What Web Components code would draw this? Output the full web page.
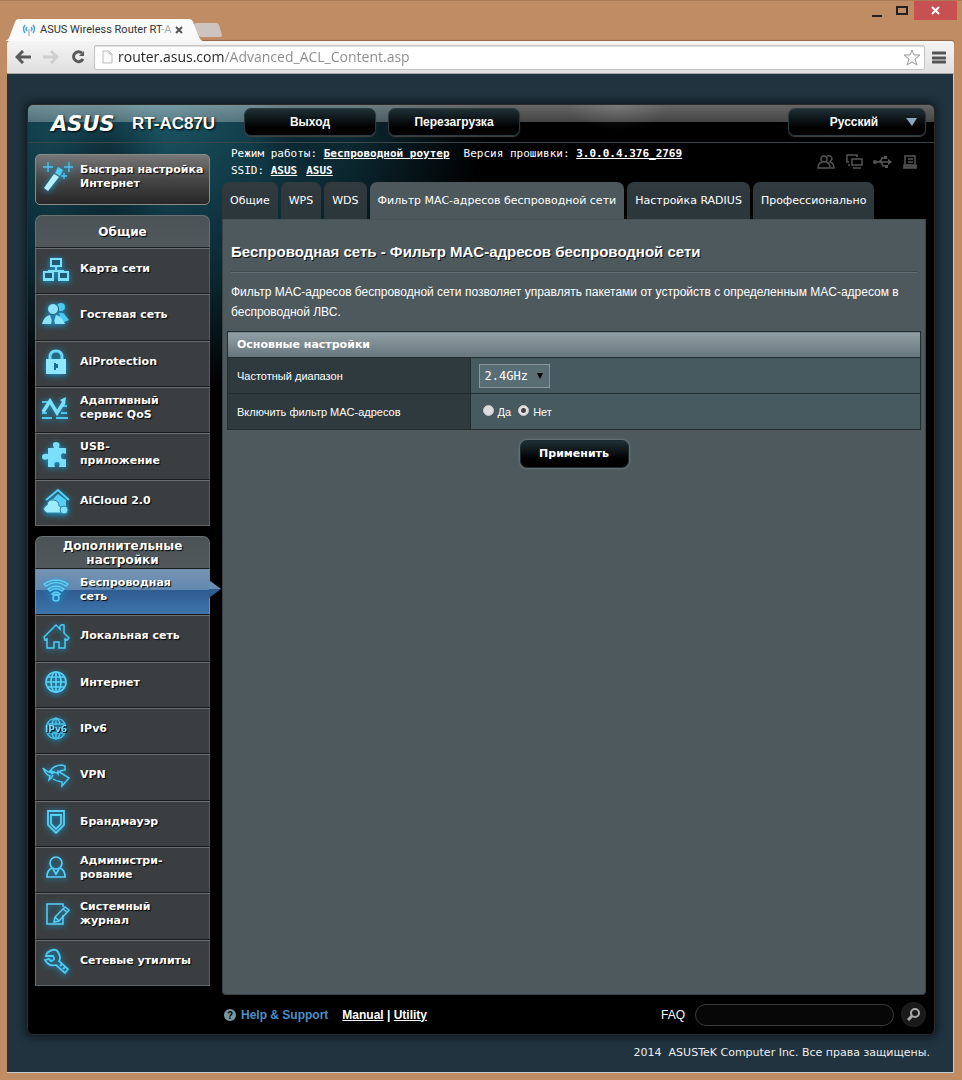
<!DOCTYPE html>
<html lang="ru">
<head>
<meta charset="utf-8">
<title>ASUS Wireless Router RT-AC87U</title>
<style>
html { height: 100%; }
body { margin: 0; min-height: 100%; display: flex; flex-direction: column; background: #c08c64; font-family: "Liberation Sans", Arial, sans-serif; }
</style>
</head>
<body>
<browser-window>
  <router-shell>
    <router-banner slot="banner"></router-banner>
    <side-nav slot="nav"></side-nav>
    <status-bar slot="main"></status-bar>
    <page-tabs slot="main"></page-tabs>
    <filter-panel slot="main"></filter-panel>
    <help-bar slot="main"></help-bar>
  </router-shell>
</browser-window>
<script>
function define(name, html) {
  const template = document.createElement('template');
  template.innerHTML = html;
  customElements.define(name, class extends HTMLElement {
    constructor() {
      super();
      this.attachShadow({ mode: 'open' }).append(template.content.cloneNode(true));
    }
  });
}

const ICONS = {
  wand: '<g stroke="#4cc4f0" stroke-width="1.3"><path d="M5 0v10M0 5h10M26 0v10M21 5h9M21 11v6M18 14h6" /></g><path d="M1 26 11 12l5 3L5 29z" fill="#b8f0ff"/><path d="M12 11 15 5l5 3-3 6z" fill="#4fcdf5"/>',
  map: '<g fill="#1f5a76" stroke="#7de0fb" stroke-width="2"><path d="M9 4h10v7H9zM2 17h9v7H2zM17 17h9v7h-9z"/></g><path d="M14 12v4M6 16h16M1 25h11M16 25h11" stroke="#7de0fb" stroke-width="2"/>',
  guest: '<circle cx="19" cy="6" r="4" fill="#49c8f2"/><path d="M17 12q5-1 6 2l4 5-7 3z" fill="#49c8f2"/><circle cx="11" cy="8" r="5.500" fill="#8ce4fc" stroke="#2a5a70"/><path d="M0 23q2-8 8-9l3 9zM23 23q-3-8-9-9l-3 9z" fill="#8ce4fc"/><path d="M11 14l-2 9h4z" fill="#2b7b9a"/>',
  lock: '<path d="M8 12V9q0-6 6-6t6 6v3" fill="none" stroke="#6ad8fa" stroke-width="3"/><path d="M4 11h20v15H4z" fill="#90e6fd"/><path d="M13 15v7M15 16v4" stroke="#1c6c8e" stroke-width="2"/>',
  qos: '<path d="M0 8h6M19 12h6M0 19h5M19 19h6M0 24h10M14 24h12" stroke="#4fc4ec" stroke-width="2"/><path d="M1 18 8 7l7 12 7-11" fill="none" stroke="#7de0fb" stroke-width="3.500"/><path d="M18 6l6-3-1 8z" fill="#7de0fb"/>',
  puzzle: '<path d="M6 8h6q-3-6 2-6t3 6h7v6q-5-2-5 2t5 3v8h-7q2-5-2-5t-2 5H6v-8q-6 2-6-2t6-3z" fill="#7adffb"/>',
  cloud: '<path d="M4 13 16 3l11 10" fill="none" stroke="#58d0f6" stroke-width="2"/><path d="M16 7l8 6v10H8v-8z" fill="#56cdf3"/><path d="M5 26q-7-4 0-8 1-6 7-5 5 1 5 6 5 2 3 7z" fill="#9cebff" stroke="#2b86a9"/><circle cx="22" cy="23" r="4" fill="#82e2fc" stroke="#2b86a9"/>',
  wifi: '<g fill="none" stroke="#5bcff3" stroke-width="1.500"><path d="M2 8q12-8 24 0l-2 2q-10-7-20 0zM6 13q8-6 16 0l-2 2q-6-5-12 0zM10 18q4-4 8 0l-2 1q-2-2-4 0z"/><circle cx="14" cy="22" r="3"/></g>',
  house: '<path d="M2 15 14 3l4 4q-1-5 4-4v8l5 5-2 2-2-1v9h-6v-6h-5v6H5v-9l-2 1z" fill="none" stroke="#4fcbf2" stroke-width="1.500"/>',
  globe: '<g fill="none" stroke="#5bd0f5" stroke-width="1.600"><circle cx="14" cy="13" r="10"/><ellipse cx="14" cy="13" rx="5" ry="10"/><path d="M4 13h20M14 3v20M6 8h16M6 18h16"/></g>',
  ipv6: '<g fill="none" stroke="#4cc4ea" stroke-width="1.400"><path d="M5 9a10 10 0 0 1 18 0zM5 18a10 10 0 0 0 18 0zM10 9q1-5 4-6 3 1 4 6M10 18q1 5 4 6 3-1 4-6M14 3v6M14 18v6"/></g><text x="14" y="17" text-anchor="middle" font-family="DejaVu Sans" font-size="9" fill="#7bdcf8">IPv6</text>',
  vpn: '<path d="M1 7q6 6 11 4-2-1-4-1 4-6 12-6l3 1v4q-5 0-8 4M9 13q5-3 7 0v-3l11 7-7 8v-4q-6-1-9-3M1 7q3 7 7 8l-1 4q3-2 4-5" fill="none" stroke="#4fcbf2" stroke-width="1.500"/>',
  shield: '<g fill="none" stroke="#5bd0f5" stroke-width="1.800"><path d="M6 3h16v14l-8 8-8-8z"/><path d="M9 7h10v9l-5 5-5-5z"/></g>',
  admin: '<g fill="none" stroke="#5bd0f5" stroke-width="1.700"><circle cx="14" cy="9" r="6"/><path d="M10 14q-5 2-5 9h18q0-7-5-9M11 15l3 5 3-5"/></g>',
  log: '<g fill="none" stroke="#5bd0f5" stroke-width="1.500"><path d="M21 15v9H5V4h16v3"/><path d="M12 22l1-5L23 7l4 3-10 11zM13 17l4 4M21 9l4 3"/></g>',
  tools: '<g fill="none" stroke="#4fcbf2" stroke-width="1.800"><path d="M5 6q9-7 12 1 2 4 0 7l9 8-3 4-9-8q-7 2-11-5l4-1 2 2q5-1 2-5H4z"/><path d="M18 19l2-2M21 22l2-2"/></g>',
  clients: '<g fill="none" stroke="#555" stroke-width="1.400"><circle cx="6" cy="5" r="3"/><path d="M4 8q-4 1-4 6h12q0-5-4-6M9 2q5-1 5 3l-2 3q4 1 4 6h-3"/></g>',
  lan: '<g fill="none" stroke="#555" stroke-width="1.500"><rect x="6" y="5" width="10" height="6"/><path d="M11 3V1H1v7h2M7 14h8M2 11h2"/></g>',
  usb: '<g fill="none" stroke="#555" stroke-width="1.500"><path d="M1 8h14M3 8q4 0 5-4h3M5 8q3 0 4 4h3"/></g><circle cx="1" cy="8" r="2" fill="#555"/><path d="M14 5l4 3-4 3zM10 2h3v3h-3zM11 11h3v3h-3z" fill="#555"/>',
  printer: '<g fill="none" stroke="#555" stroke-width="1.500"><path d="M3 10V2h10v8M6 5h5M6 8h5"/><path d="M2 11h12v3H2z" fill="#444"/></g>'
};
customElements.define('line-icon', class extends HTMLElement {
  connectedCallback() {
    if (this.shadowRoot) return;
    const box = this.getAttribute('box') || 28;
    this.attachShadow({ mode: 'open' }).innerHTML = `
      <style>:host{display:block;flex:none} svg{display:block;overflow:visible}</style>
      <svg width="${box}" height="${box}" viewBox="0 0 ${box} ${box}" fill="none" aria-hidden="true">${ICONS[this.getAttribute('name')]}</svg>`;
  }
});

define('browser-window', `
<style>
:host { flex: 1; display: flex; flex-direction: column; padding: 0 8px 7px 7px; border-top: 1px solid #a87a56; }
svg { display: block; }
.strip { display: flex; align-items: flex-end; height: 40px; position: relative; }
.tab { position: relative; display: flex; align-items: center; width: 190px; height: 22px; color: #333; font: 11px/18px Roboto, sans-serif; box-sizing: border-box; padding: 0 14px 0 15px; }
.shape { position: absolute; left: -2px; bottom: 0; }
.tab > :not(.shape) { position: relative; }
.title { flex: 1; margin-left: 4px; white-space: nowrap; }
.fade { color: #aaa; }
button { border: 0; padding: 0; background: none; display: block; color: inherit; }
.new { margin: 0 0 4px -3px; }
.controls { position: absolute; right: -3px; top: 0; display: flex; align-items: flex-start; }
.controls button { height: 19px; }
.close { width: 43px; background: #c75050; }
.min, .max { width: 25px; }
.controls svg { margin: auto; }
.bar { display: flex; align-items: center; height: 32px; background: linear-gradient(#f5f5f5,#dfdfdf); border-bottom: 1px solid #aaa; border-radius: 3px 3px 0 0; padding: 0 8px; box-shadow: 0 -1px 1px #8d6547; }
.bar > button { margin-right: 12px; }
.bar > .reload { margin-right: 9px; }
.address { flex: 1; display: flex; align-items: center; height: 25px; box-sizing: border-box; background: #fff; border: 1px solid #c4c4c4; border-radius: 2px; padding: 0 3px 0 7px; box-shadow: inset 0 1px 1px #ddd; }
input { flex: 1; min-width: 0; border: 0; outline: 0; padding: 0; margin-left: 5px; height: 20px; font: 14px/20px "Open Sans", sans-serif; background: linear-gradient(90deg,#222 106px,#8a8a8a 106px); background-clip: text; -webkit-text-fill-color: transparent; }
.bar > .menu { margin: 0 0 0 7px; }
.view { flex: 1; display: flex; flex-direction: column; background: #21333e; border: solid #c7ccd0; border-width: 0 1px 1px 0; }
</style>
<div class="strip">
  <div class="tab">
    <svg class="shape" width="198" height="22"><path d="M0 22Q3 21 4 19L10 3Q11 0 14 0H184Q187 0 188 3L194 18Q195 21 198 22z" fill="#fafafa"/></svg>
    <svg width="14" height="14" fill="none" stroke="#47a9d4" stroke-width="1.500"><path d="M3 2Q0 6 3 10M5 4Q3 6 5 8M11 2q3 4 0 8M9 4q2 2 0 4"/><path d="M7 6v7" stroke="#b9b9b9"/></svg>
    <span class="title">ASUS Wireless Router RT<span class="fade">-A</span></span>
    <button aria-label="Закрыть вкладку"><svg width="8" height="8" stroke="#555" stroke-width="2"><path d="M1 1l6 6M7 1L1 7"/></svg></button>
  </div>
  <button class="new" aria-label="Новая вкладка"><svg width="28" height="14"><path d="M0 2Q0 0 3 0H22Q24 0 25 2L28 12Q28 14 26 14H7Q5 14 4 12z" fill="#cdc4bf"/></svg></button>
  <div class="controls">
    <button class="min" aria-label="Свернуть"><svg width="10" height="16"><path d="M0 12h10v2H0z" fill="#222"/></svg></button>
    <button class="max" aria-label="Развернуть"><svg width="12" height="17"><path d="M1 5h10v7H1z" fill="none" stroke="#222" stroke-width="2"/></svg></button>
    <button class="close" aria-label="Закрыть"><svg width="9" height="9" stroke="#fff" stroke-width="2"><path d="M1 1l7 7M8 1L1 8"/></svg></button>
  </div>
</div>
<div class="bar">
  <button aria-label="Назад"><svg width="16" height="14" fill="none" stroke="#5a5a5a" stroke-width="3"><path d="M8 1L2 7l6 6M2 7h14"/></svg></button>
  <button aria-label="Вперёд"><svg width="16" height="14" fill="none" stroke="#cfcfcf" stroke-width="3"><path d="M8 1l6 6-6 6M14 7H0"/></svg></button>
  <button class="reload" aria-label="Обновить"><svg width="14" height="14" fill="none" stroke="#5a5a5a" stroke-width="3"><path d="M11 3A5 5 0 1 0 12 9"/><path d="M13 1v5H8z" fill="#5a5a5a" stroke="none"/></svg></button>
  <div class="address">
    <svg width="11" height="14" fill="#fafafa" stroke="#bbb"><path d="M1 1h6l3 3v9H1zM7 1v3h3"/></svg>
    <input aria-label="Адрес" value="router.asus.com/Advanced_ACL_Content.asp">
    <button aria-label="Добавить в закладки"><svg width="18" height="17" fill="#fff" stroke="#999"><path d="M9 1l2 5h6l-5 4 2 6-5-3-5 3 2-6-5-4h6z"/></svg></button>
  </div>
  <button class="menu" aria-label="Меню"><svg width="14" height="13"><path d="M1 2h12M1 7h12M1 11h12" stroke="#555" stroke-width="3" stroke-linecap="round"/></svg></button>
</div>
<div class="view"><slot></slot></div>`);

define('router-shell', `
<style>
:host { flex: 1; display: flex; flex-direction: column; padding: 30px 18px 0 20px; }
.case { flex: 1; display: flex; flex-direction: column; color: #fff; background:
   radial-gradient(ellipse 60px 100px at 80px 70px,#04141caa,transparent),
   radial-gradient(ellipse 50px 60px at 270px 20px,#04141c88,transparent),
   radial-gradient(ellipse 350px 290px at 110px 0,#1d5a6a 0,#103844 40%,#0b252e 65%,transparent),
   #000;
   border: 1px solid #2c2a2b; border-radius: 6px; box-shadow: 0 0 9px 2px #0c1820; box-sizing: border-box; }
.columns { flex: 1; display: grid; grid-template-columns: 175px minmax(0,1fr); column-gap: 12px; padding: 0 8px 0 7px; }
.main { display: flex; flex-direction: column; min-width: 0; }
footer { height: 37px; box-sizing: border-box; padding: 10px 5px 0 0; text-align: right; color: #eee; font: 11px/16px "DejaVu Sans", sans-serif; white-space: pre; }
</style>
<div class="case">
  <slot name="banner"></slot>
  <div class="columns">
    <slot name="nav"></slot>
    <div class="main"><slot name="main"></slot></div>
  </div>
</div>
<footer>2014  ASUSTeK Computer Inc. Все права защищены.</footer>`);

define('router-banner', `
<style>
:host { display: flex; align-items: flex-start; gap: 12px; height: 34px; padding: 3px 8px 0 23px; border-bottom: 1px solid #3b4548; border-radius: 5px 5px 0 0; background:
  radial-gradient(ellipse 50px 25px at 590px 0,#fff2,transparent),
  linear-gradient(#fff6 0,#fff4 17px,transparent 17px); }
.brand { display: flex; align-items: center; width: 181px; height: 31px; white-space: nowrap; text-shadow: 1px 1px 2px #000; }
.logo { font: italic bold 21px/24px "DejaVu Sans", sans-serif; width: 81px; }
.model { font: bold 17px/24px "Liberation Sans", sans-serif; }
button, select { height: 28px; border: 1px solid #2c3b40; border-radius: 7px; background: linear-gradient(#1f3036,#000 70%); color: #fff; font: bold 12px/16px "Liberation Sans", sans-serif; box-shadow: 0 1px 1px #444; padding: 0; text-shadow: 1px 1px #000; box-sizing: border-box; }
button { width: 132px; }
.lang { margin-left: auto; position: relative; }
select { appearance: none; width: 138px; padding: 0 6px 0 0; text-align: center; text-align-last: center; }
.lang svg { position: absolute; right: 8px; top: 10px; pointer-events: none; }
</style>
<div class="brand"><span class="logo">ASUS</span><span class="model">RT-AC87U</span></div>
<button>Выход</button><button>Перезагрузка</button>
<div class="lang"><select aria-label="Язык"><option>Русский</option></select><svg width="12" height="9"><path d="M0 0h11L6 8z" fill="#8fa6ba"/></svg></div>`);

define('side-nav', `
<style>
:host { display: block; padding: 11px 0 8px; }
.quick { display: flex; align-items: center; width: 100%; height: 51px; box-sizing: border-box; border: 1px solid #8a8a8a; border-radius: 5px; background: linear-gradient(#777,#464646 50%,#272727); color: #fff; font: bold 11px/14px "DejaVu Sans", sans-serif; text-align: left; padding: 0 0 6px 7px; gap: 7px; white-space: nowrap; text-shadow: 1px 1px 1px #000; }
.quick line-icon { filter: drop-shadow(0 1px 3px #119fd9); }
nav-group { margin-top: 10px; }
</style>
<button class="quick"><line-icon name="wand" box="30"></line-icon><span>Быстрая настройка<br>Интернет</span></button>
<nav-group style="--rows: 278px">
  <span slot="title">Общие</span>
  <nav-item icon="map">Карта сети</nav-item>
  <nav-item icon="guest">Гостевая сеть</nav-item>
  <nav-item icon="lock">AiProtection</nav-item>
  <nav-item icon="qos">Адаптивный<br>сервис QoS</nav-item>
  <nav-item icon="puzzle">USB-<br>приложение</nav-item>
  <nav-item icon="cloud">AiCloud 2.0</nav-item>
</nav-group>
<nav-group style="--rows: 417px">
  <span slot="title">Дополнительные<br>настройки</span>
  <nav-item icon="wifi" active>Беспроводная<br>сеть</nav-item>
  <nav-item icon="house">Локальная сеть</nav-item>
  <nav-item icon="globe">Интернет</nav-item>
  <nav-item icon="ipv6">IPv6</nav-item>
  <nav-item icon="vpn">VPN</nav-item>
  <nav-item icon="shield">Брандмауэр</nav-item>
  <nav-item icon="admin">Администри-<br>рование</nav-item>
  <nav-item icon="log">Системный<br>журнал</nav-item>
  <nav-item icon="tools">Сетевые утилиты</nav-item>
</nav-group>`);

define('nav-group', `
<style>
:host { display: block; }
h2 { margin: 0; height: 33px; box-sizing: border-box; display: flex; align-items: center; justify-content: center; text-align: center; background: linear-gradient(#4b5357,#50585b); border: 1px solid #687073; border-bottom-color: #1c1f20; border-radius: 7px 7px 0 0; font: bold 12px/14px "DejaVu Sans", sans-serif; text-shadow: 1px 1px 1px #000; }
nav { display: grid; grid-auto-rows: 1fr; min-height: var(--rows); }
</style>
<h2><slot name="title"></slot></h2>
<nav><slot></slot></nav>`);

customElements.define('nav-item', class extends HTMLElement {
  connectedCallback() {
    if (this.shadowRoot) return;
    this.attachShadow({ mode: 'open' }).innerHTML = `
<style>
:host { display: block; position: relative; box-sizing: border-box; background: #3a3e40; border: 1px solid #6a6e70; border-bottom-color: #17191a; border-right-color: #5a5e60; }
:host(:last-child) { border-bottom-color: #63676a; }
:host([active]) { background: linear-gradient(#7593b1,#6389b0 20px,#2e5c90 20px,#3d74ac); border-color: #6e8fb0; border-bottom-color: #17191a; }
:host([active])::after { content: ""; position: absolute; left: 100%; top: 10px; width: 12px; height: 18px; background: linear-gradient(#6a8eb3 50%,#2e5c90 50%); clip-path: polygon(0 0,100% 50%,0 100%); }
a { display: flex; align-items: center; gap: 10px; height: 100%; box-sizing: border-box; padding: 0 0 4px 6px; color: #fff; text-decoration: none; font: bold 11px/14px "DejaVu Sans", sans-serif; text-shadow: 1px 1px 1px #000; white-space: nowrap; }
line-icon { filter: drop-shadow(0 1px 3px #11a0dd); }
</style>
<a href="#"><line-icon name="${this.getAttribute('icon')}"></line-icon><span><slot></slot></span></a>`;
  }
});

define('status-bar', `
<style>
:host { display: flex; justify-content: space-between; height: 37px; padding: 2px 8px 0 9px; font: 11px/17px "DejaVu Sans Mono", monospace; white-space: nowrap; }
a { color: #fff; font-weight: bold; }
.mode { margin-right: 14px; }
.ssid { margin-right: 9px; }
.icons { display: flex; gap: 12px; padding-top: 9px; }
</style>
<div>
  <div>Режим работы: <a class="mode" href="#">Беспроводной роутер</a>Версия прошивки: <a href="#">3.0.0.4.376_2769</a></div>
  <div>SSID: <a class="ssid" href="#">ASUS</a><a href="#">ASUS</a></div>
</div>
<div class="icons"><line-icon name="clients" box="16"></line-icon><line-icon name="lan" box="16"></line-icon><line-icon name="usb" box="16"></line-icon><line-icon name="printer" box="16"></line-icon></div>`);

define('page-tabs', `
<style>
:host { display: flex; gap: 3px; height: 37px; font: 11px/37px "DejaVu Sans", sans-serif; }
a { padding: 0 8px; color: #fff; text-decoration: none; background: linear-gradient(#313a3e,#2b373b); border-radius: 7px 7px 0 0; white-space: nowrap; }
a[aria-current] { background: #4d585c; }
</style>
<a href="#">Общие</a><a href="#">WPS</a><a href="#">WDS</a><a href="#" aria-current="page">Фильтр MAC-адресов беспроводной сети</a><a href="#">Настройка RADIUS</a><a href="#">Профессионально</a>`);

define('filter-panel', `
<style>
:host { flex: 1; display: block; box-sizing: border-box; padding: 22px 4px; background: #4d595d; border: 1px solid #3a4448; border-top-color: #465154; border-radius: 0 0 4px 4px; font: 12px/20px "Liberation Sans", sans-serif; }
h1 { margin: 0 4px 9px; font-size: 15px; line-height: 20px; padding-bottom: 10px; border-bottom: 1px solid #607074; box-shadow: 0 -1px #3d484c inset; text-shadow: 1px 1px #111; }
p { margin: 0 4px 9px; }
table { width: 100%; border-collapse: collapse; font-size: 11px; line-height: 16px; }
th, td { border: 1px solid #222b2e; text-align: left; padding: 0 9px; height: 35px; font-weight: normal; }
thead th { height: 25px; background: linear-gradient(#92a0a5,#66757c); font: bold 11px/16px "DejaVu Sans", sans-serif; }
tbody th { width: 35%; box-sizing: border-box; background: #2f3a3e; }
td { background: #475a5f; padding: 0 8px; }
.pick { position: relative; display: inline-block; vertical-align: middle; }
select { appearance: none; display: block; width: 71px; height: 24px; padding: 0 5px; border: 1px solid #87949a; border-radius: 0; background: #596d74; color: #fff; font: 12px/20px "DejaVu Sans Mono", monospace; }
.pick svg { position: absolute; right: 6px; top: 9px; pointer-events: none; }
.radios { display: flex; align-items: center; gap: 7px; padding-left: 4px; }
label { display: flex; align-items: center; gap: 4px; }
input { appearance: none; margin: 0 0 3px; width: 11px; height: 11px; border-radius: 50%; background: #ddd; border: 1px solid #c8c8c8; }
input:checked { background: radial-gradient(#444 0 2px,#e4e4e4 3px); }
.apply { display: block; margin: 10px auto 0; width: 109px; height: 28px; border: 1px solid #1c2c31; border-radius: 7px; background: linear-gradient(#1f3036,#000 70%); box-shadow: 0 0 2px 1px #69767a; color: #fff; font: bold 11px/16px "DejaVu Sans", sans-serif; padding: 0; }
</style>
<h1>Беспроводная сеть - Фильтр MAC-адресов беспроводной сети</h1>
<p>Фильтр MAC-адресов беспроводной сети позволяет управлять пакетами от устройств с определенным MAC-адресом в беспроводной ЛВС.</p>
<table>
  <thead><tr><th colspan="2">Основные настройки</th></tr></thead>
  <tbody>
    <tr><th><label for="band">Частотный диапазон</label></th>
      <td><span class="pick"><select id="band"><option>2.4GHz</option></select><svg width="7" height="7"><path d="M0 0h6L3 6z"/></svg></span></td></tr>
    <tr><th id="acl">Включить фильтр MAC-адресов</th>
      <td><div class="radios" role="radiogroup" aria-labelledby="acl"><label><input type="radio" name="acl">Да</label><label><input type="radio" name="acl" checked>Нет</label></div></td></tr>
  </tbody>
</table>
<button class="apply">Применить</button>`);

define('help-bar', `
<style>
:host { display: flex; align-items: center; height: 39px; font: bold 12px/16px "Liberation Sans", sans-serif; white-space: nowrap; }
svg { display: block; }
.q { margin: 0 5px 0 2px; }
.help { color: #4a90c8; margin-right: 14px; }
a { color: #fff; }
form { margin: 0 0 0 auto; display: flex; align-items: center; }
label { font-weight: normal; margin-right: 10px; }
input { width: 199px; height: 22px; box-sizing: border-box; border: 1px solid #3a3a3a; border-radius: 11px; background: #070707; color: #fff; padding: 0 10px; margin: 0 7px 0 0; }
button { width: 25px; height: 25px; border: 1px solid #222; border-radius: 50%; background: #1a1a1a; padding: 0 0 0 5px; }
</style>
<svg class="q" width="12" height="12"><circle cx="6" cy="6" r="6" fill="#78979f"/><text x="6" y="10" text-anchor="middle" font-family="Liberation Sans" font-size="10" font-weight="bold" fill="#000">?</text></svg>
<span class="help">Help &amp; Support</span><span><a href="#">Manual</a> | <a href="#">Utility</a></span>
<form onsubmit="return false"><label for="faq">FAQ</label><input id="faq" type="search"><button aria-label="Найти"><svg width="13" height="13" fill="none" stroke="#aaa" stroke-width="2"><circle cx="8" cy="5" r="4"/><path d="M5 8l-4 4" stroke-width="3"/></svg></button></form>`);
</script>
</body>
</html>
